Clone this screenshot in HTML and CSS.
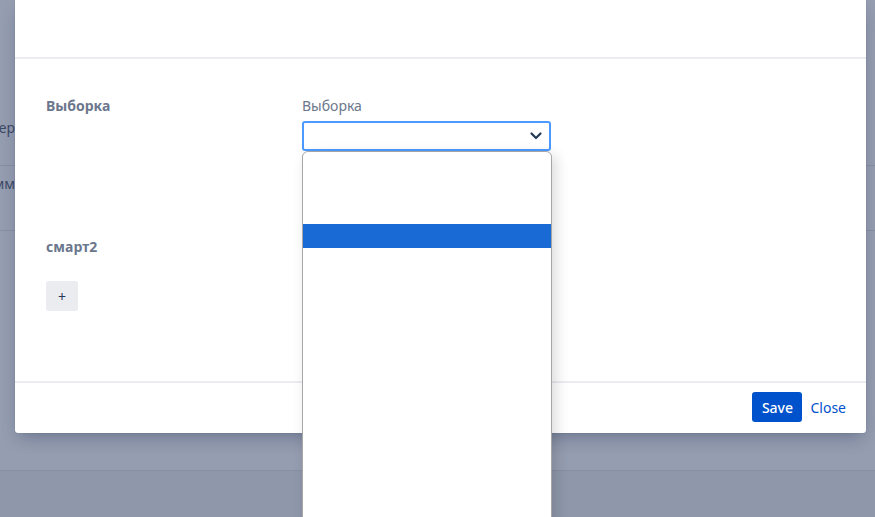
FILE: index.html
```html
<!DOCTYPE html>
<html lang="ru">

<head>
    <meta charset="UTF-8">
    <meta name="viewport" content="width=device-width, initial-scale=1.0">
    <title>Выборка</title>
    <link rel="stylesheet" href="styles.css">
</head>

<body>
    <div class="page">
        <div class="page-row page-row-first">
            <div class="page-cell">Супер</div>
        </div>
        <div class="page-row page-row-second">
            <div class="page-cell">Комм</div>
        </div>
        <div class="page-row page-row-third"></div>
        <div class="page-row page-row-last"></div>
    </div>

    <div class="modal">
        <div class="modal-header"></div>

        <div class="modal-body">
            <div class="form-row">
                <div class="form-name">Выборка</div>
                <div class="form-field">
                    <label class="field-label">Выборка</label>
                    <div class="select">
                        <svg class="select-arrow" width="16" height="16" viewBox="0 0 16 16">
                            <path d="M3.5 5.5 L8 10 L12.5 5.5" fill="none" stroke="#253858" stroke-width="2.2" stroke-linecap="round" stroke-linejoin="round"/>
                        </svg>
                    </div>
                </div>
            </div>

            <div class="form-row form-row-smart">
                <div class="form-name">смарт2</div>
            </div>

            <button class="add-button">+</button>
        </div>

        <div class="modal-footer">
            <button class="save-button">Save</button>
            <button class="close-button">Close</button>
        </div>
    </div>

    <div class="dropdown">
        <div class="dropdown-option"></div>
        <div class="dropdown-option"></div>
        <div class="dropdown-option"></div>
        <div class="dropdown-option dropdown-option-active"></div>
    </div>
</body>

</html>
```

FILE: styles.css
```css
:root {
    --blanket-color: #959db0;
    --blanket-dark: #8f98ab;
    --text-subtle: #6b778c;
    --text-dark: #253858;
    --divider-color: #ebecf0;
    --primary-color: #0052cc;
    --focus-color: #4c9aff;
}

* {
    margin: 0;
    padding: 0;
    box-sizing: border-box;
}

body {
    font-family: "Noto Sans", "Open Sans", sans-serif;
    font-size: 14px;
    background-color: var(--blanket-color);
    color: var(--text-dark);
    width: 875px;
    height: 517px;
    overflow: hidden;
    position: relative;
}

.page {
    display: flex;
    flex-direction: column;
    height: 100%;
}

.page-row {
    border-bottom: 1px solid #878fa3;
}

.page-row-first {
    height: 166px;
    padding-top: 118px;
}

.page-row-second {
    height: 65px;
    padding-top: 8px;
}

.page-row-third {
    height: 240px;
}

.page-row-last {
    flex: 1;
    border-bottom: none;
    background-color: var(--blanket-dark);
}

.page-cell {
    width: 15px;
    display: flex;
    justify-content: flex-end;
    overflow: hidden;
    white-space: nowrap;
    color: #3d4a66;
    font-size: 14px;
}

.modal {
    position: absolute;
    left: 15px;
    top: 0;
    width: 851px;
    height: 433px;
    background-color: #ffffff;
    border-radius: 0 0 3px 3px;
    box-shadow: 0 8px 16px -4px rgba(9, 30, 66, 0.3), 0 0 1px rgba(9, 30, 66, 0.3);
    display: flex;
    flex-direction: column;
}

.modal-header {
    height: 59px;
    border-bottom: 2px solid var(--divider-color);
}

.modal-body {
    flex: 1;
    padding: 38px 31px 0;
}

.form-row {
    display: flex;
}

.form-name {
    width: 256px;
    font-weight: 700;
    color: var(--text-subtle);
    line-height: 18px;
}

.form-field {
    width: 249px;
}

.field-label {
    display: block;
    color: var(--text-subtle);
    line-height: 18px;
    margin-bottom: 6px;
}

.select {
    height: 30px;
    border: 2px solid var(--focus-color);
    border-radius: 3px;
    display: flex;
    justify-content: flex-end;
    align-items: center;
    padding-right: 5px;
}

.form-row-smart {
    margin-top: 87px;
}

.add-button {
    margin-top: 25px;
    width: 32px;
    height: 30px;
    border: none;
    border-radius: 3px;
    background-color: var(--divider-color);
    color: var(--text-dark);
    font-family: inherit;
    font-size: 14px;
}

.modal-footer {
    height: 52px;
    border-top: 2px solid var(--divider-color);
    display: flex;
    justify-content: flex-end;
    align-items: center;
    gap: 8px;
    padding: 0 20px 2px 0;
}

.save-button {
    width: 50px;
    height: 30px;
    border: none;
    border-radius: 3px;
    background-color: var(--primary-color);
    color: #ffffff;
    font-family: inherit;
    font-size: 14px;
    font-weight: 500;
}

.close-button {
    border: none;
    background: none;
    color: var(--primary-color);
    font-family: inherit;
    font-size: 14px;
}

.dropdown {
    position: absolute;
    left: 302px;
    top: 151px;
    width: 250px;
    height: 380px;
    background-color: #ffffff;
    border: 1px solid #a6a6a6;
    border-radius: 6px 6px 0 0;
    box-shadow: 4px 4px 14px rgba(0, 0, 0, 0.15);
}

.dropdown-option {
    height: 24px;
}

.dropdown-option-active {
    background-color: #1a6ad6;
}
```
